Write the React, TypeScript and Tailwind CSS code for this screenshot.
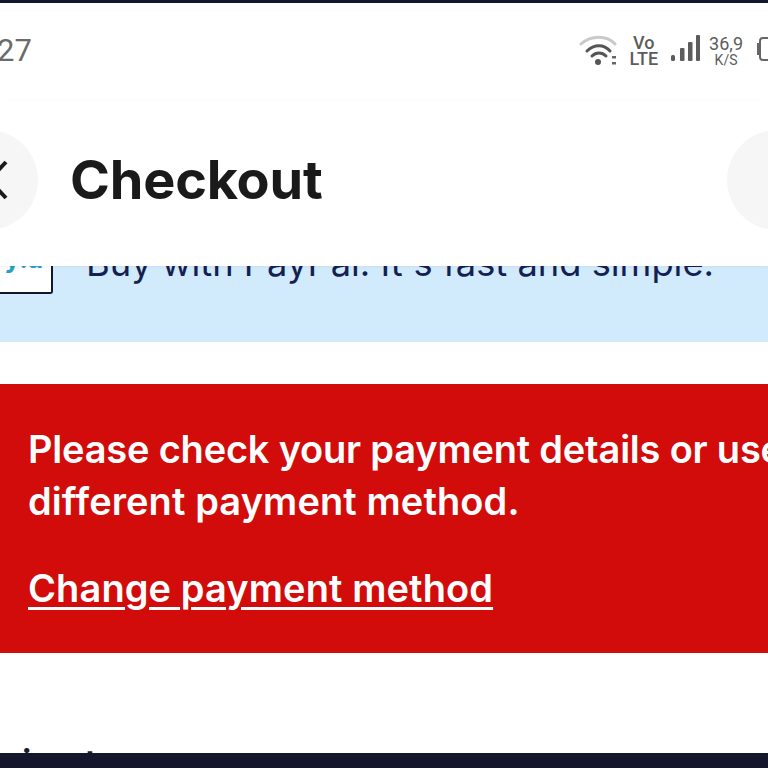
const WifiIcon = () => (
  <svg width="42" height="36" viewBox="0 0 42 36" fill="none">
    <path d="M2 12C12 3 28 3 36 12" stroke="#c9c9c9" strokeWidth="3" strokeLinecap="round" />
    <path d="M8 19C15 12 25 12 31 19" stroke="#555" strokeWidth="3" strokeLinecap="round" />
    <path d="M13 24C17 20 23 20 27 24" stroke="#555" strokeWidth="3" strokeLinecap="round" />
    <circle cx="19" cy="30" r="3" fill="#555" />
    <rect x="33" y="24" width="4" height="2.5" fill="#666" />
    <rect x="33" y="30" width="4" height="2.5" fill="#666" />
  </svg>
);

const SignalIcon = () => (
  <svg width="30" height="30" viewBox="0 0 30 30" fill="#5c5c5c">
    <rect x="1" y="21" width="4" height="6" rx="1.5" />
    <rect x="10" y="14" width="4.5" height="13" rx="1" />
    <rect x="18" y="8" width="4.5" height="19" rx="1" />
    <rect x="26" y="1" width="4" height="26" rx="1" />
  </svg>
);

const App = () => {
  return (
    <div className="w-[768px] h-[768px] overflow-hidden flex flex-col bg-white font-['Inter',sans-serif]">
      <div className="h-[3px] shrink-0 bg-[#14162b]"></div>

      <div className="h-[97px] shrink-0 flex items-center justify-between pb-[4px] overflow-hidden">
        <span className="text-[31px] text-[#6b6b6b] font-['Roboto',sans-serif] -ml-[3px] mt-[3px]">27</span>
        <div className="flex items-center -mr-[9px] -mt-[5px] font-['Roboto',sans-serif] text-[#5c5c5c]">
          <div className="mt-[5px] ml-[3px]">
            <WifiIcon />
          </div>
          <div className="flex flex-col items-center ml-[8px] font-medium text-[18px] leading-[16px] mt-[8px]">
            <span>Vo</span>
            <span>LTE</span>
          </div>
          <div className="ml-[12px] mt-[4px]">
            <SignalIcon />
          </div>
          <div className="flex flex-col items-center ml-[9px] mt-[8px]">
            <span className="text-[18px] leading-[18px]">36,9</span>
            <span className="text-[14px] leading-[14px]">K/S</span>
          </div>
          <div className="ml-[14px] mt-[3px] flex items-center">
            <div className="w-[2px] h-[12px] bg-[#666]"></div>
            <div className="w-[18px] h-[24px] border-2 border-[#666] rounded-[4px]"></div>
          </div>
        </div>
      </div>

      <div className="h-[166px] shrink-0 flex items-center justify-between relative z-10 shadow-[0_1px_3px_rgba(0,0,0,0.05)] bg-white pb-[6px]">
        <div className="flex items-center">
          <div className="w-[100px] h-[100px] -ml-[62px] rounded-full bg-[#f6f6f6] flex items-center justify-end pr-[30px] shrink-0">
            <svg width="22" height="42" viewBox="0 0 22 42" fill="none">
              <path d="M20 3L3 21L20 39" stroke="#1a1a1a" strokeWidth="4" />
            </svg>
          </div>
          <h1 className="ml-[32px] text-[54px] leading-none font-bold text-[#1a1a1a] tracking-[-0.2px]">Checkout</h1>
        </div>
        <div className="w-[100px] h-[100px] -mr-[59px] rounded-full bg-[#f6f6f6] shrink-0"></div>
      </div>

      <div className="h-[76px] shrink-0 bg-[#d1eafc] overflow-hidden flex items-start">
        <div className="w-[53px] h-[28px] shrink-0 border-r-2 border-b-2 border-[#14162b] rounded-br-[3px] bg-white overflow-hidden flex justify-end">
          <span className="text-[26px] leading-none font-bold text-[#2a9fc9] -mt-[20px] pr-[8px]">y.a</span>
        </div>
        <p className="ml-[33px] -mt-[28px] text-[36.3px] leading-[50px] whitespace-nowrap text-[#141f52]">
          Buy with PayPal. It's fast and simple.
        </p>
      </div>

      <div className="h-[42px] shrink-0"></div>

      <div className="h-[269px] shrink-0 bg-[#d20b0b] overflow-hidden pl-[28px] pt-[39px] text-white font-semibold text-[38px] leading-[52px]">
        <p className="whitespace-nowrap tracking-[-0.2px]">Please check your payment details or use a</p>
        <p className="tracking-[0.1px]">different payment method.</p>
        <a className="block mt-[35px] underline underline-offset-[5px] decoration-[3px] tracking-[0.1px]">Change payment method</a>
      </div>

      <div className="flex-1 flex items-end overflow-hidden">
        <div className="h-[5px] overflow-hidden flex text-[36px] leading-[50px] font-semibold text-[#1a1a2e] pl-[22px]">
          <span className="-mt-[10px]">i</span>
          <span className="ml-[53px] -mt-[10px]">t</span>
        </div>
      </div>
      <div className="h-[15px] shrink-0 bg-[#14162b]"></div>
    </div>
  );
};

export default App;
